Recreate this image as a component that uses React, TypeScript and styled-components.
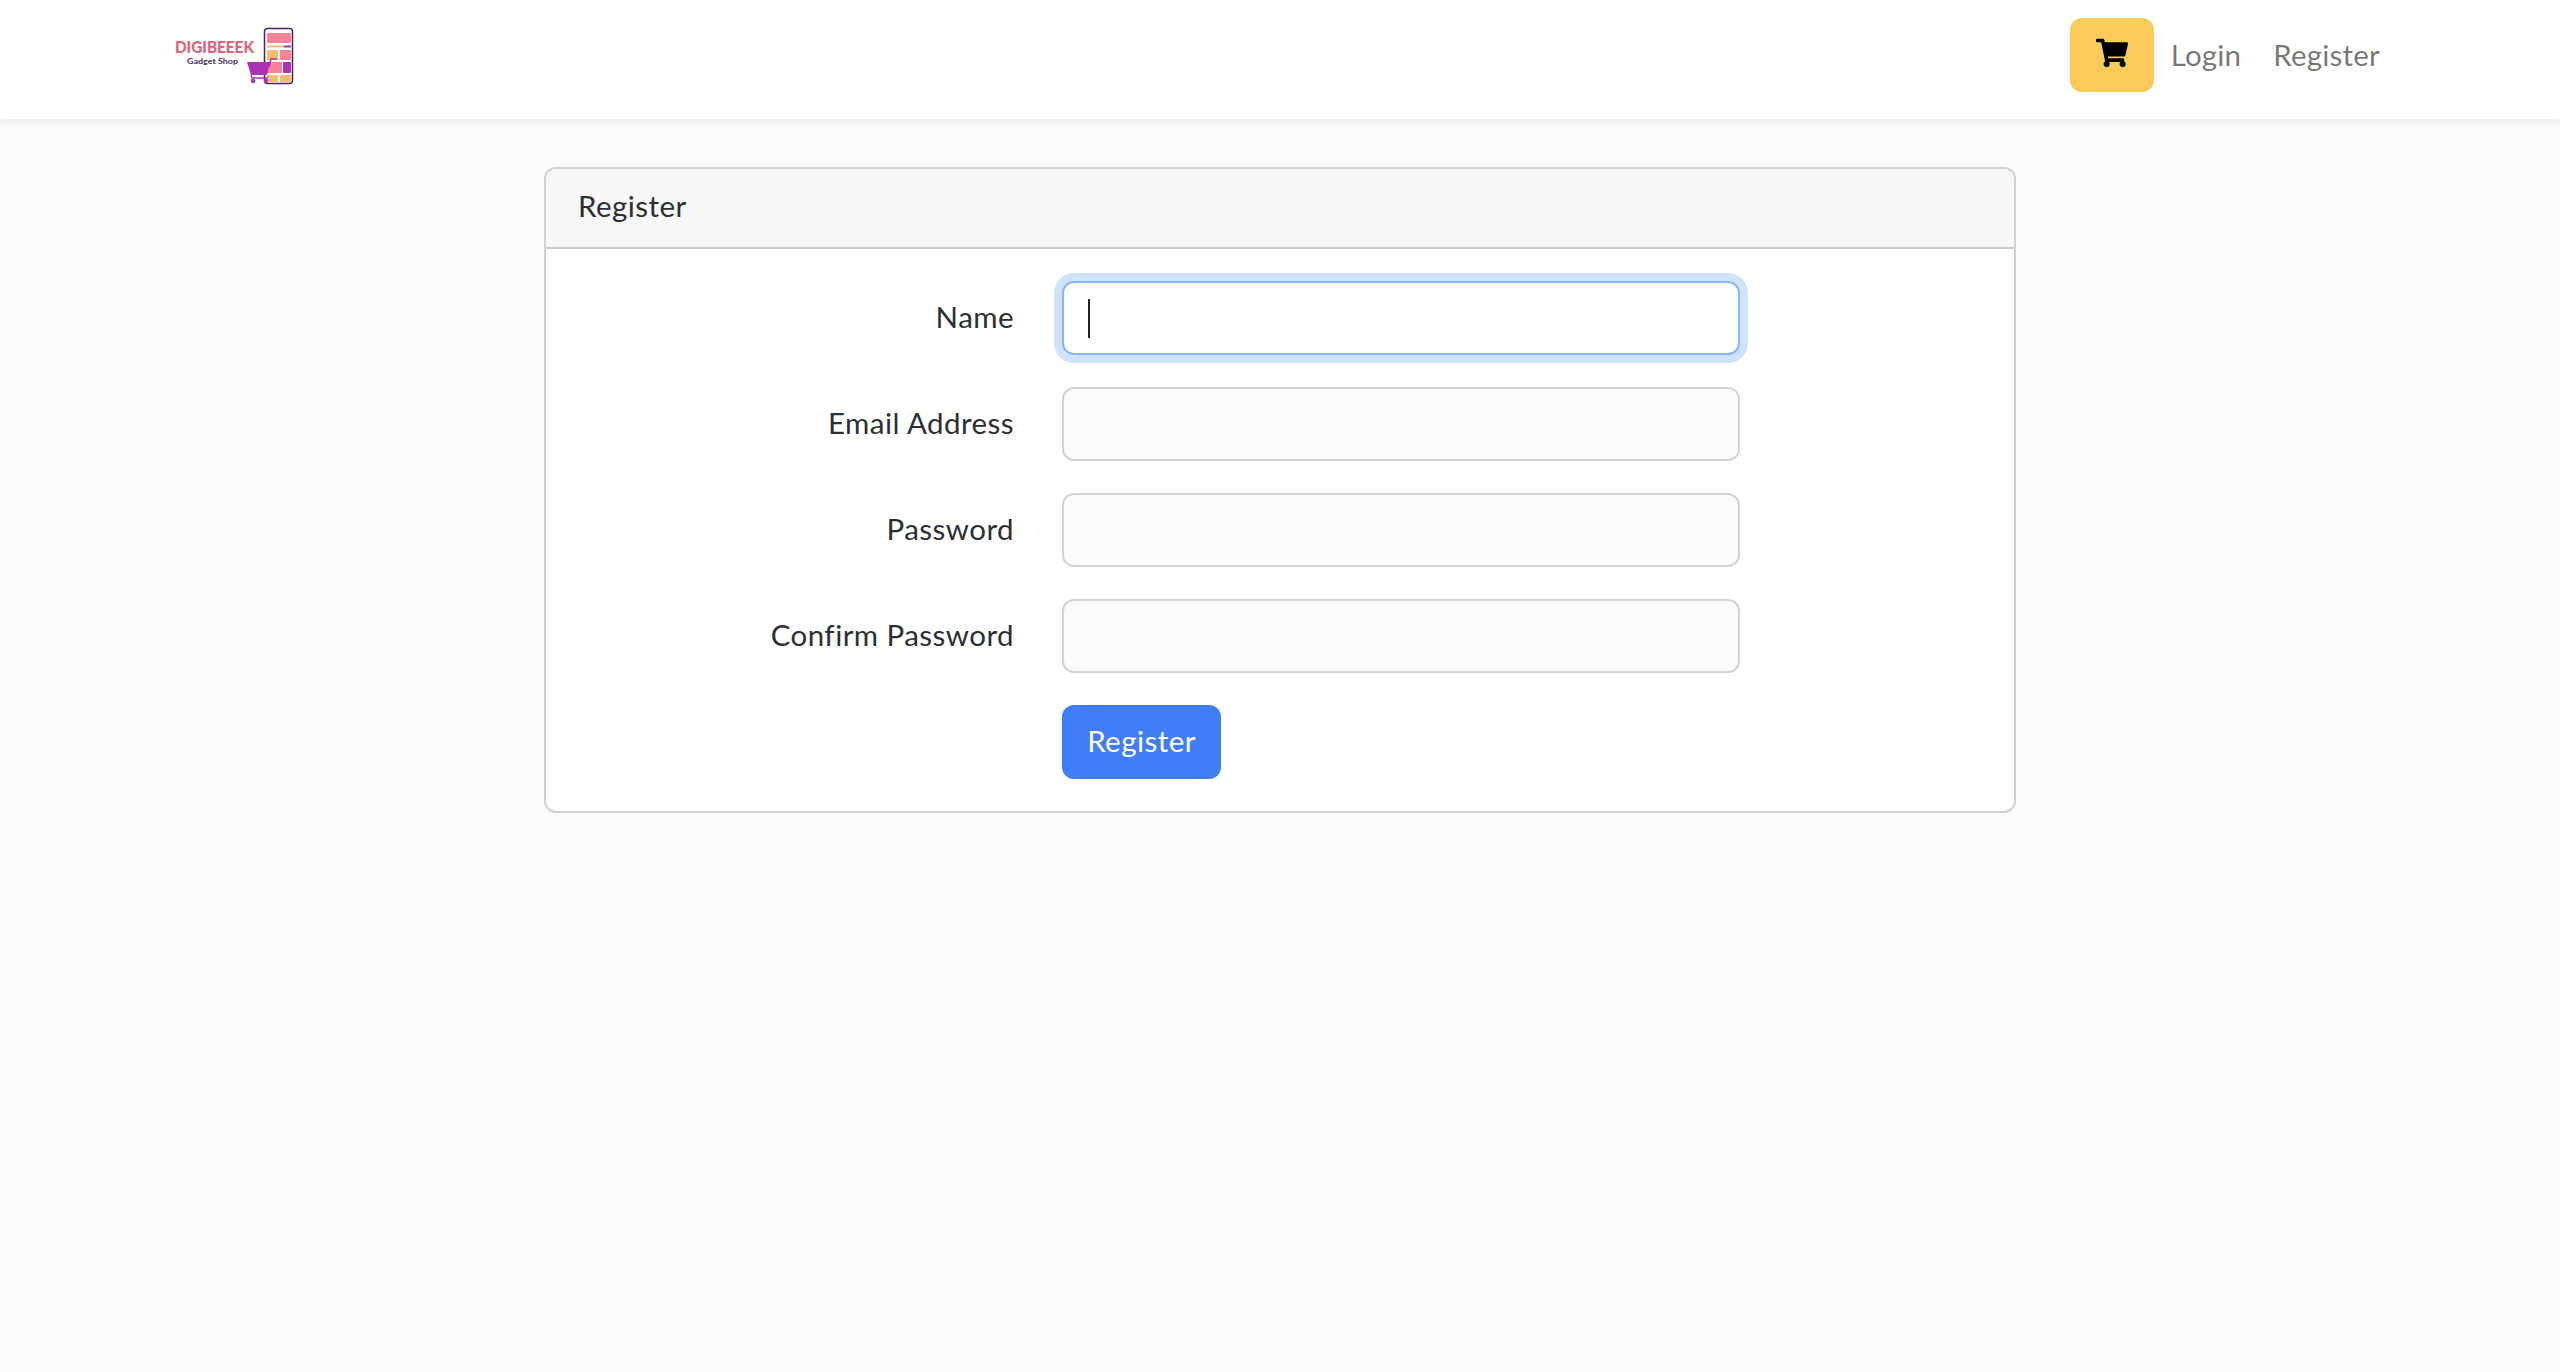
import React from "react";
import styled, { createGlobalStyle } from "styled-components";
import { FaShoppingCart } from "react-icons/fa";

const GlobalStyle = createGlobalStyle`
  html, body {
    margin: 0;
    padding: 0;
  }
  body {
    background: #f9fbfd;
    font-family: "Lato", "Open Sans", sans-serif;
    font-size: 29.5px;
    letter-spacing: 0.45px;
    line-height: 46px;
    color: #2b2f33;
  }
  * {
    box-sizing: border-box;
  }
`;

const fields = [
  { label: "Name", focused: true },
  { label: "Email Address", focused: false },
  { label: "Password", focused: false },
  { label: "Confirm Password", focused: false },
];

const Logo = () => (
  <svg width="136" height="74" viewBox="0 0 136 74" aria-label="Digibeeek">
    <text x="11" y="35" textLength="79" lengthAdjust="spacingAndGlyphs" fontFamily="Lato, sans-serif" fontWeight="900" fontSize="16.5" letterSpacing="0" fill="#e2627b">
      DIGIBEEEK
    </text>
    <text x="23" y="46" textLength="51" lengthAdjust="spacingAndGlyphs" fontFamily="Lato, sans-serif" fontWeight="700" fontSize="8.4" letterSpacing="0" fill="#4c2a66">
      Gadget Shop
    </text>
    <rect x="100.500" y="10.500" width="28" height="55" rx="3" fill="#fff" stroke="#4a1f66" strokeWidth="1.500" />
    <rect x="103" y="15" width="24" height="10" rx="1" fill="#f98296" />
    <rect x="103" y="27.500" width="16" height="2" fill="#f7bd6c" />
    <rect x="119.500" y="27.500" width="7.500" height="2" fill="#9b35ad" />
    <rect x="103" y="32" width="11" height="10" rx="1" fill="#f7bd6c" />
    <rect x="116" y="32" width="11" height="10" rx="1" fill="#f98296" />
    <rect x="103" y="44" width="15" height="11" rx="1" fill="#f98296" />
    <rect x="119" y="44" width="8" height="11" rx="1" fill="#ad31b4" />
    <rect x="103" y="57" width="11" height="7" rx="1" fill="#f7bd6c" />
    <rect x="116" y="57" width="11" height="7" rx="1" fill="#f7bd6c" />
    <path d="M83 44H106L103 57H87Z" fill="#ad31b4" />
    <path d="M105 49L107 41H113M87 57L88 60H104" fill="none" stroke="#ad31b4" strokeWidth="1.500" />
    <circle cx="89" cy="63" r="2.200" fill="#ad31b4" />
    <circle cx="102" cy="63" r="2.200" fill="#ad31b4" />
  </svg>
);

export default function App() {
  return (
    <>
      <GlobalStyle />
      <Navbar>
        <NavContainer>
          <Logo />
          <NavLinks>
            <CartButton type="button">
              <FaShoppingCart size={32} />
            </CartButton>
            <NavLink href="#">Login</NavLink>
            <NavLink href="#">Register</NavLink>
          </NavLinks>
        </NavContainer>
      </Navbar>
      <Main>
        <Card>
          <CardHeader>Register</CardHeader>
          <CardBody>
            {fields.map((field) => (
              <FormRow key={field.label}>
                <Label>{field.label}</Label>
                <InputWrap>
                  <Input $focused={field.focused} readOnly />
                  {field.focused && <Caret />}
                </InputWrap>
              </FormRow>
            ))}
            <ButtonRow>
              <SubmitButton type="button">Register</SubmitButton>
            </ButtonRow>
          </CardBody>
        </Card>
      </Main>
    </>
  );
}

const Navbar = styled.nav`
  height: 119px;
  background: #fff;
  box-shadow: 0 2px 8px rgba(0, 0, 0, 0.075);
`;

const NavContainer = styled.div`
  width: 2232px;
  margin: 0 auto;
  padding-top: 18px;
  display: flex;
  justify-content: space-between;
  align-items: flex-start;
`;

const NavLinks = styled.div`
  display: flex;
  align-items: center;
  height: 74px;
`;

const CartButton = styled.button`
  width: 84px;
  height: 74px;
  margin-right: 1px;
  padding: 0 0 4px;
  border: none;
  border-radius: 12px;
  background: #facb58;
  color: #000;
  display: flex;
  align-items: center;
  justify-content: center;
`;

const NavLink = styled.a`
  padding: 16px;
  color: rgba(0, 0, 0, 0.55);
  letter-spacing: 0.2px;
  text-decoration: none;
`;

const Main = styled.main`
  padding-top: 48px;
`;

const Card = styled.section`
  width: 1472px;
  margin: 0 auto;
  background: #fff;
  border: 2px solid rgba(0, 0, 0, 0.18);
  border-radius: 12px;
  overflow: hidden;
`;

const CardHeader = styled.header`
  padding: 14px 32px 0;
  height: 80px;
  background: #f7f7f7;
  border-bottom: 2px solid rgba(0, 0, 0, 0.18);
`;

const CardBody = styled.div`
  padding: 32px;
  display: flex;
  flex-direction: column;
  gap: 32px;
`;

const FormRow = styled.div`
  display: grid;
  grid-template-columns: 436px 678px;
  column-gap: 48px;
  align-items: center;
`;

const Label = styled.label`
  padding-bottom: 2px;
  text-align: right;
`;

const InputWrap = styled.div`
  position: relative;
`;

const Input = styled.input<{ $focused: boolean }>`
  display: block;
  width: 100%;
  height: 74px;
  border-radius: 12px;
  outline: none;
  border: 2px solid ${(props) => (props.$focused ? "#86b7fe" : "#ced4da")};
  background: ${(props) => (props.$focused ? "#fff" : "#f9fbfd")};
  box-shadow: ${(props) => (props.$focused ? "0 0 0 8px rgba(13, 110, 253, 0.2)" : "none")};
`;

const Caret = styled.span`
  position: absolute;
  left: 26px;
  top: 18px;
  width: 2px;
  height: 39px;
  background: #212529;
`;

const ButtonRow = styled.div`
  padding-left: 484px;
`;

const SubmitButton = styled.button`
  height: 74px;
  width: 159px;
  padding: 0 0 2px;
  border: none;
  border-radius: 12px;
  background: #3f7ef6;
  color: #fff;
  font: inherit;
  letter-spacing: inherit;
`;
